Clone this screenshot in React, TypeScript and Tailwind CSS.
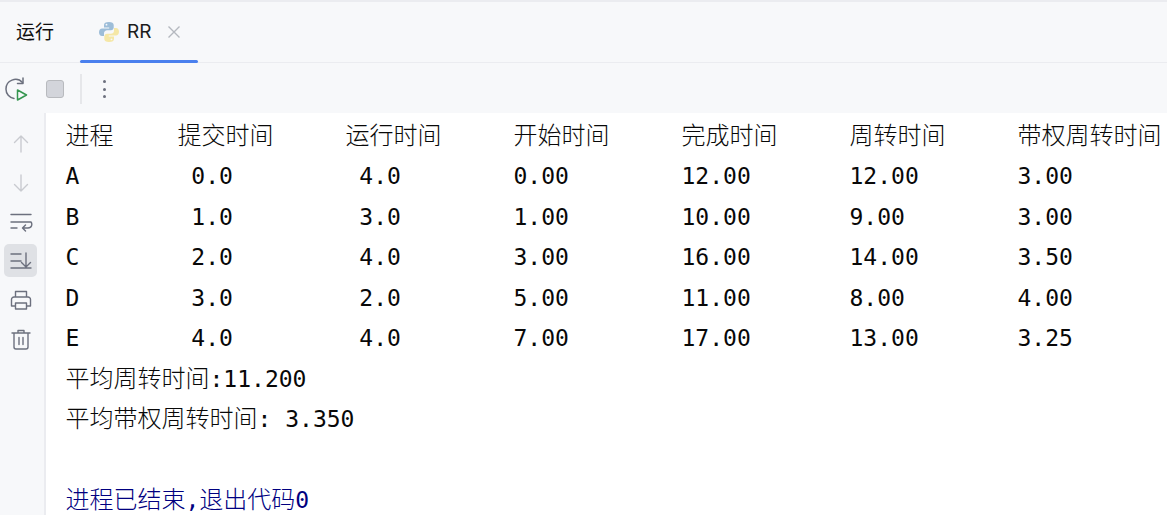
const mono = "font-['DejaVu_Sans_Mono','Noto_Sans_CJK_SC',monospace]"

const columns = ["进程", "提交时间", "运行时间", "开始时间", "完成时间", "周转时间", "带权周转时间"]

const rows = [
  ["A", " 0.0", " 4.0", "0.00", "12.00", "12.00", "3.00"],
  ["B", " 1.0", " 3.0", "1.00", "10.00", "9.00", "3.00"],
  ["C", " 2.0", " 4.0", "3.00", "16.00", "14.00", "3.50"],
  ["D", " 3.0", " 2.0", "5.00", "11.00", "8.00", "4.00"],
  ["E", " 4.0", " 4.0", "7.00", "17.00", "13.00", "3.25"],
]

function Cjk({ children }: { children: string }) {
  return <span className="font-['Noto_Sans_CJK_SC',sans-serif] text-[24px] leading-none font-light">{children}</span>
}

function PythonLogo() {
  return (
    <svg width="22" height="22" viewBox="0 0 22 22" fill="none">
      <path
        d="M11 1C7.5 1 6 2.2 6 4v2.5h5.2v1H4.2C2.2 7.500 1 9 1 11.200c0 2.300 1.200 3.800 3 3.800h2v-2.700c0-1.800 1.400-3.100 3.100-3.100h3.900c1.500 0 2.700-1.200 2.700-2.700V4c0-1.800-1.800-3-4.700-3z"
        fill="#9dbdd8"
      />
      <path
        d="M11 21c3.500 0 5-1.200 5-3v-2.500h-5.200v-1h7c2 0 3.200-1.500 3.200-3.700 0-2.300-1.200-3.800-3-3.800h-2v2.700c0 1.800-1.400 3.100-3.100 3.100H9c-1.500 0-2.700 1.200-2.700 2.700V18c0 1.800 1.800 3 4.700 3z"
        fill="#f5e7a6"
      />
      <circle cx="8.500" cy="3.700" r="0.900" fill="#f7f8fa" />
      <circle cx="13.500" cy="18.300" r="0.900" fill="#f7f8fa" />
    </svg>
  )
}

function RerunIcon() {
  return (
    <svg width="24" height="24" viewBox="0 0 24 24" fill="none" strokeWidth="1.500" strokeLinecap="round" strokeLinejoin="round">
      <path d="M10 21.500A9.500 9.500 0 0 1 2 12 9.500 9.500 0 0 1 18.500 5.500" stroke="#6c707e" />
      <path d="M19 1v5.500h-5.500" stroke="#6c707e" />
      <path d="M13.500 13l9 5-9 5z" stroke="#369650" fill="#f7f8fa" />
    </svg>
  )
}

function SideIcon({ children, active }: { children: React.ReactNode; active?: boolean }) {
  return (
    <div className={`flex h-[33px] w-[33px] items-center justify-center rounded-[5px] ${active ? "bg-[#dfe1e5]" : ""}`}>
      {children}
    </div>
  )
}

function Icon({ children, color = "#6c707e" }: { children: React.ReactNode; color?: string }) {
  return (
    <svg width="24" height="24" viewBox="0 0 24 24" fill="none" stroke={color} strokeWidth="1.400" strokeLinecap="round" strokeLinejoin="round">
      {children}
    </svg>
  )
}

export default function App() {
  return (
    <div className="flex h-[515px] w-[1167px] flex-col overflow-hidden border-t-2 border-[#ebecf0] bg-[#f7f8fa]">
      <div className="flex h-[61px] shrink-0 border-b border-[#ebecf0]">
        <div className="flex w-[80px] items-center pb-[1px] pl-[16px] font-['Noto_Sans_CJK_SC',sans-serif] text-[19px] font-normal text-[#0f0f0f]">
          运行
        </div>
        <div className="relative flex w-[118px] items-center pl-[18px]">
          <PythonLogo />
          <span className="ml-[7px] font-['Inter',sans-serif] text-[19px] text-[#1c1c1c]">RR</span>
          <svg className="ml-[16px]" width="14" height="14" viewBox="0 0 14 14" stroke="#b4b8bf" strokeWidth="1.400">
            <path d="M1.500 1.500l11 11M12.500 1.500l-11 11" />
          </svg>
          <div className="absolute right-0 bottom-[-1px] left-0 h-[3px] rounded-full bg-[#4a80ee]" />
        </div>
      </div>

      <div className="flex h-[50px] shrink-0 items-center pt-[2px] pl-[4px]">
        <RerunIcon />
        <div className="ml-[18px] h-[18px] w-[18px] rounded-[3px] border border-[#b8babe] bg-[#d3d5db]" />
        <div className="ml-[16px] h-[30px] w-[2px] bg-[#e6e7ea]" />
        <div className="ml-[21px] flex h-[18px] flex-col justify-between">
          <div className="h-[3px] w-[3px] rounded-full bg-[#6c707e]" />
          <div className="h-[3px] w-[3px] rounded-full bg-[#6c707e]" />
          <div className="h-[3px] w-[3px] rounded-full bg-[#6c707e]" />
        </div>
      </div>

      <div className="flex min-h-0 flex-1">
        <div className="flex w-[46px] shrink-0 flex-col items-center gap-[6px] border-r-2 border-[#ebecf0] pt-[14px] pr-[3px]">
          <SideIcon>
            <Icon color="#c9cbd0">
              <path d="M12 20V4M5.500 10.500L12 4l6.500 6.500" />
            </Icon>
          </SideIcon>
          <SideIcon>
            <Icon color="#c9cbd0">
              <path d="M12 4v16M5.500 13.500L12 20l6.500-6.500" />
            </Icon>
          </SideIcon>
          <SideIcon>
            <Icon>
              <path d="M2 4.500h20M2 12h20c1.500 2 1 6-3 6h-5M16.500 15l-3 3 3 3M2 18h6" />
            </Icon>
          </SideIcon>
          <SideIcon active>
            <Icon>
              <path d="M2 5h10M2 12h10M2 19h20M17 4v14M12.500 13.500L17 18l4.500-4.500" />
            </Icon>
          </SideIcon>
          <SideIcon>
            <Icon>
              <path d="M6.500 9V3.500h11V9M6.500 18H2.500v-6.500a2.500 2.500 0 0 1 2.500-2.500h14a2.500 2.500 0 0 1 2.500 2.500V18h-4M6.500 15h11v6h-11z" />
            </Icon>
          </SideIcon>
          <SideIcon>
            <Icon>
              <path d="M3 6h18M9 5.500V3.500h6v2M5 6v14a2 2 0 0 0 2 2h10a2 2 0 0 0 2-2V6M10 10.500v7M14 10.500v7" />
            </Icon>
          </SideIcon>
        </div>

        <div className={`min-w-0 flex-1 bg-white pt-[2.500px] pl-[19.500px] text-[23px] leading-[40.500px] whitespace-pre text-[#080808] ${mono}`}>
          <div className="grid h-[40.500px] grid-cols-[112px_168px_168px_168px_168px_168px_1fr]">
            {columns.map((col) => (
              <div key={col}>
                <Cjk>{col}</Cjk>
              </div>
            ))}
          </div>
          {rows.map((row) => (
            <div key={row[0]} className="grid h-[40.500px] grid-cols-[112px_168px_168px_168px_168px_168px_1fr]">
              {row.map((cell, i) => (
                <div key={i}>{cell}</div>
              ))}
            </div>
          ))}
          <div className="h-[40.500px]">
            <Cjk>平均周转时间</Cjk>:11.200
          </div>
          <div className="h-[40.500px]">
            <Cjk>平均带权周转时间</Cjk>: 3.350
          </div>
          <div className="h-[40.500px]">&nbsp;</div>
          <div className="h-[40.500px] text-[#000080]">
            <Cjk>进程已结束</Cjk>,<Cjk>退出代码</Cjk>0
          </div>
        </div>
      </div>
    </div>
  )
}
